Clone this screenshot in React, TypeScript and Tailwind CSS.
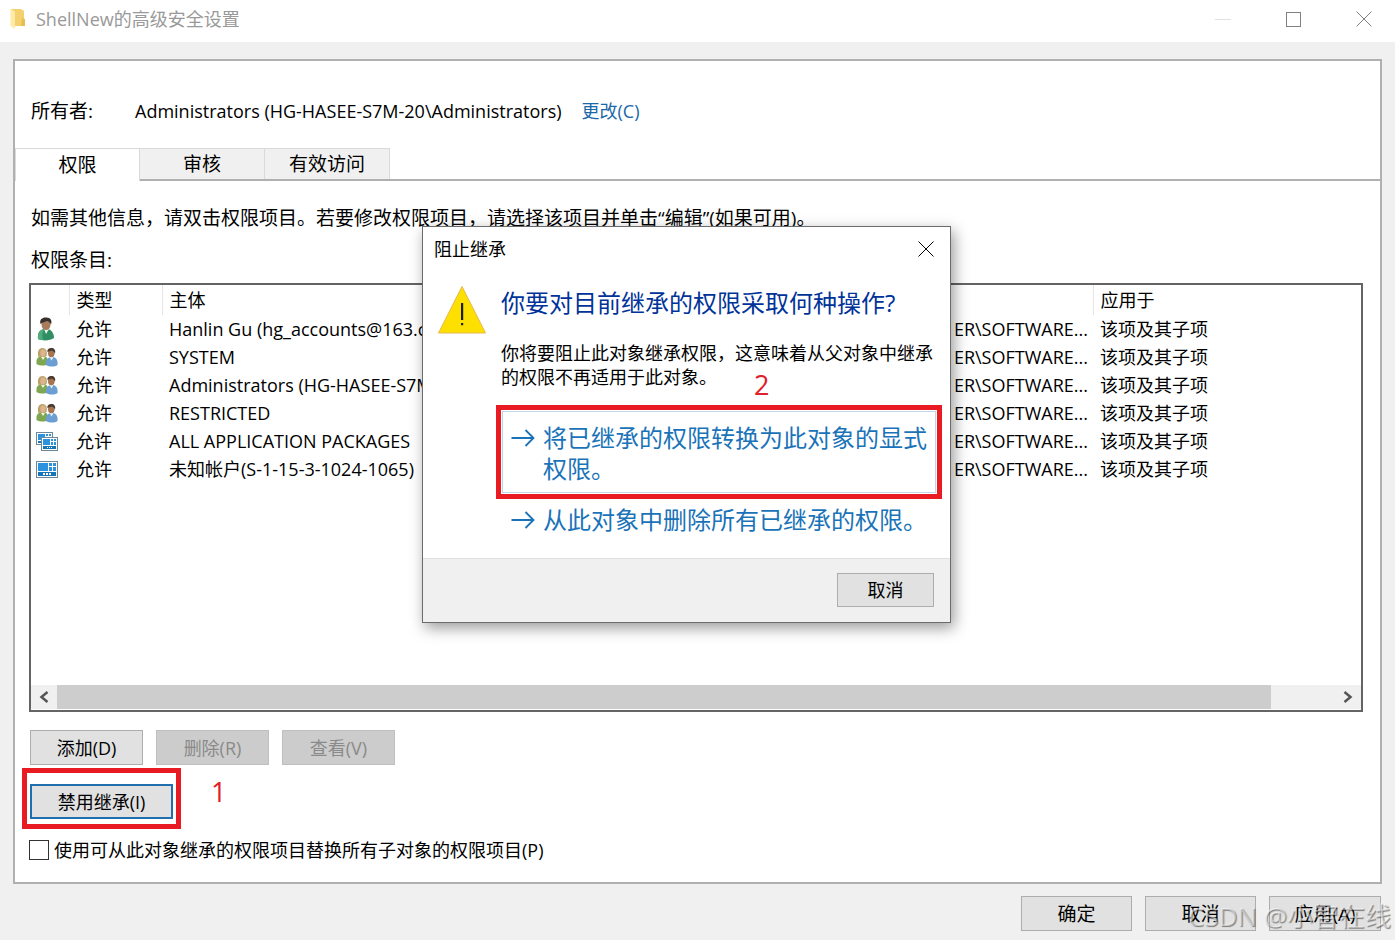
import React from "react";

type IconKind = "user" | "group" | "packages" | "package";

interface Entry {
  icon: IconKind;
  principal: string;
}

const entries: Entry[] = [
  { icon: "user", principal: "Hanlin Gu (hg_accounts@163.com)" },
  { icon: "group", principal: "SYSTEM" },
  { icon: "group", principal: "Administrators (HG-HASEE-S7M-20)" },
  { icon: "group", principal: "RESTRICTED" },
  { icon: "packages", principal: "ALL APPLICATION PACKAGES" },
  { icon: "package", principal: "未知帐户(S-1-15-3-1024-1065)" },
];

function FolderIcon() {
  return (
    <svg width="16" height="22" viewBox="0 0 16 22" aria-hidden="true">
      <path d="M1 1h10l3 2v15H4L1 18z" fill="#f4d06e" />
      <path d="M12 10l3 1v7h-4z" fill="#e9bd55" />
      <path d="M0.500 0.800L5 3.500v17.500L0.500 18z" fill="#ffeaa6" />
    </svg>
  );
}

function UserIcon() {
  return (
    <svg width="22" height="24" viewBox="0 0 22 24" aria-hidden="true">
      <path d="M2 22c-.5-6 1-9 6-10h4c4 1 6 5 6 9-4 3-12 3-16 1z" fill="#2f8f63" />
      <path d="M2 22c-.5-6 1-9 6-10-2 4-2 7-1 11-2 0-4 0-5-1z" fill="#52ab7e" />
      <path d="M8 12l2 5 3-5z" fill="#e8f3ec" />
      <ellipse cx="10" cy="7.500" rx="4.500" ry="5.500" fill="#a87b5c" />
      <path d="M4.500 7C3 2 7 0 10.500 0.500c4 0 6 3 4.500 7-1-2-2-3-4-3.500-2 1-4 1-6.500 3z" fill="#37302c" />
    </svg>
  );
}

function GroupIcon() {
  return (
    <svg width="22" height="20" viewBox="0 0 22 20" aria-hidden="true">
      <path d="M0.500 17c-.5-5 1-7 5-8h3c3 1 3.500 3 3.500 8-3 2-8 2-11.500 0z" fill="#7fa650" />
      <path d="M2.500 10C1 5 2.500 1 6.500 1s5 4 4 8z" fill="#b8a165" />
      <ellipse cx="7" cy="6" rx="2.700" ry="3.800" fill="#dcb48d" />
      <path d="M5 10l2 3 2-3z" fill="#eef3e4" />
      <path d="M10 18c-.5-5 1-7 4.500-8h3c3 1 4.500 3.500 4 8-3 2-8 2-11.500 0z" fill="#6b9fd4" />
      <path d="M13.500 10l2 3.500 2-3.500z" fill="#e8f0f8" />
      <ellipse cx="15.300" cy="6" rx="3.300" ry="4.300" fill="#a57550" />
      <path d="M11.500 5C11 2 13 1 15.500 1s4.500 2 3.500 5.500c-1-2-2-2.500-3.500-3-1 .8-2.500.6-4 1.500z" fill="#4a3b32" />
    </svg>
  );
}

function PackageIcon() {
  return (
    <svg width="22" height="17" viewBox="0 0 22 17" shapeRendering="crispEdges" aria-hidden="true">
      <rect x="0.500" y="0.500" width="21" height="16" fill="#fff" stroke="#6f8796" />
      <rect x="2" y="2" width="10" height="8" fill="#2b93dd" />
      <rect x="13" y="2" width="3" height="3" fill="#2b93dd" />
      <rect x="17" y="2" width="3" height="3" fill="#2b93dd" />
      <rect x="13" y="6" width="3" height="4" fill="#2b93dd" />
      <rect x="17" y="6" width="3" height="4" fill="#2b93dd" />
      <rect x="2" y="11" width="18" height="4" fill="#1675b8" />
      <path d="M7 12h2v2h-2zM10 12h2v2h-2zM13 12h2v2h-2z" fill="#fff" />
    </svg>
  );
}

function PackagesIcon() {
  return (
    <svg width="22" height="19" viewBox="0 0 22 19" shapeRendering="crispEdges" aria-hidden="true">
      <rect x="0.500" y="0.500" width="16" height="12" fill="#fff" stroke="#6f8796" />
      <rect x="2" y="2" width="7" height="6" fill="#2b93dd" />
      <path d="M10 2h2v2h-2zM13 2h2v2h-2z" fill="#2b93dd" />
      <rect x="2" y="9" width="3" height="2" fill="#1675b8" />
      <rect x="5.500" y="5.500" width="16" height="13" fill="#fff" stroke="#6f8796" />
      <rect x="7" y="7" width="7" height="6" fill="#2b93dd" />
      <path d="M15 7h2v2h-2zM18 7h2v2h-2zM15 10h2v3h-2zM18 10h2v3h-2z" fill="#2b93dd" />
      <rect x="7" y="14" width="13" height="3" fill="#1675b8" />
      <path d="M11 15h1v1h-1zM13 15h1v1h-1zM15 15h1v1h-1z" fill="#fff" />
    </svg>
  );
}

function EntryIcon({ kind }: { kind: IconKind }) {
  if (kind === "user") return <UserIcon />;
  if (kind === "group") return <GroupIcon />;
  if (kind === "packages") return <PackagesIcon />;
  return <PackageIcon />;
}

function CloseGlyph() {
  return (
    <svg width="16" height="16" viewBox="0 0 16 16" fill="none" stroke="currentColor" aria-hidden="true">
      <path d="M0.500 0.500l15 15M15.500 0.500l-15 15" />
    </svg>
  );
}

function ArrowGlyph() {
  return (
    <svg
      width="24"
      height="20"
      viewBox="0 0 24 20"
      fill="none"
      stroke="#1a73b8"
      strokeWidth="1.800"
      className="mt-1.5 shrink-0"
      aria-hidden="true"
    >
      <path d="M0.500 10h22M14.500 2l8 8-8 8" />
    </svg>
  );
}

function WarningIcon() {
  return (
    <svg width="50" height="50" viewBox="0 0 50 50" className="shrink-0" aria-hidden="true">
      <path d="M25 1.500L48.500 48h-47z" fill="#fde000" stroke="#e9b84a" />
      <path d="M24 18h2.200v17H24zM24 38h2.200v2.200H24z" fill="#1c1c1c" />
    </svg>
  );
}

function PushButton({ children, className = "", disabled = false }: {
  children: React.ReactNode;
  className?: string;
  disabled?: boolean;
}) {
  const tone = disabled
    ? "border-[#bfbfbf] bg-[#cccccc] text-[#8a8a8a]"
    : "border-[#adadad] bg-[#e1e1e1] text-black";
  return (
    <button type="button" disabled={disabled} className={`border text-center ${tone} ${className}`}>
      {children}
    </button>
  );
}

function InheritanceDialog() {
  return (
    <section
      role="dialog"
      aria-labelledby="dialog-title"
      className="absolute top-[226px] left-[422px] flex w-[529px] flex-col border border-[#6b6b6b] bg-white text-[18px] leading-6 shadow-[3px_5px_14px_rgba(0,0,0,0.4)]"
    >
      <header className="flex items-center justify-between pt-2 pr-4 pl-[11px]">
        <h2 id="dialog-title" className="leading-7">阻止继承</h2>
        <button type="button" aria-label="关闭">
          <CloseGlyph />
        </button>
      </header>
      <div className="flex gap-[14px] pt-[22px] pr-2 pl-[14px]">
        <WarningIcon />
        <div className="min-w-0 flex-1">
          <h3 className="text-[24px] leading-9 text-[#003399]">你要对目前继承的权限采取何种操作?</h3>
          <p className="mt-5 mr-2">你将要阻止此对象继承权限，这意味着从父对象中继承的权限不再适用于此对象。</p>
        </div>
      </div>
      <div className="mt-4 mr-2 ml-[73px] text-[24px] leading-[31px] text-[#1a73b8]">
        <div className="border-[5px] border-[#e81b23] p-px">
          <button type="button" className="flex w-full gap-2 border border-[#bcd8ea] px-2 pt-2.5 pb-2 text-left">
            <ArrowGlyph />
            <span className="min-w-0 flex-1 whitespace-nowrap">
              将已继承的权限转换为此对象的显式
              <br />
              权限。
            </span>
          </button>
        </div>
        <button type="button" className="flex w-full gap-2 px-[15px] pt-[5px] text-left">
          <ArrowGlyph />
          <span className="whitespace-nowrap">从此对象中删除所有已继承的权限。</span>
        </button>
      </div>
      <footer className="mt-[23px] flex justify-end border-t border-[#dfdfdf] bg-[#f0f0f0] px-4 pt-3.5 pb-[15px]">
        <PushButton className="h-[34px] w-[97px]">取消</PushButton>
      </footer>
      <span className="absolute top-[142px] left-[331px] text-[27px] leading-8 text-[#e02029]">2</span>
    </section>
  );
}

export default function App() {
  return (
    <div className="relative flex min-h-screen flex-col overflow-hidden bg-[#f0f0f0] font-['Open_Sans','Noto_Sans_CJK_SC',sans-serif] text-[19px] leading-7 text-black">
      <header className="flex h-[42px] items-center justify-between bg-white pr-[23px] pb-1 pl-[10px] text-[18px] text-[#999999]">
        <div className="flex items-center gap-[10px]">
          <FolderIcon />
          <h1>ShellNew的高级安全设置</h1>
        </div>
        <div className="flex items-center gap-[55px]">
          <button type="button" aria-label="最小化" disabled>
            <svg width="16" height="16" viewBox="0 0 16 16" stroke="#e2e2e2" aria-hidden="true">
              <path d="M0 8.500h16" />
            </svg>
          </button>
          <button type="button" aria-label="最大化">
            <svg width="15" height="15" viewBox="0 0 15 15" fill="none" stroke="#808080" aria-hidden="true">
              <rect x="0.500" y="0.500" width="14" height="14" />
            </svg>
          </button>
          <button type="button" aria-label="关闭" className="text-[#808080]">
            <CloseGlyph />
          </button>
        </div>
      </header>

      <main className="mx-[13px] mt-[17px] flex flex-1 flex-col border-2 border-[#b0b0b0] bg-white">
        <div className="flex pt-9 pl-4">
          <span className="w-[104px]">所有者:</span>
          <span className="mr-5 text-[18px]">Administrators (HG-HASEE-S7M-20\Administrators)</span>
          <a href="#change" className="text-[18px] text-[#1a68a8]">更改(C)</a>
        </div>

        <div role="tablist" className="mt-[23px] flex">
          <button type="button" role="tab" aria-selected="true" className="h-[33px] w-[125px] border border-b-0 border-[#d9d9d9]">权限</button>
          <div className="flex flex-1 border-b-2 border-[#b0b0b0]">
            <button type="button" role="tab" aria-selected="false" className="w-[125px] border-t border-r border-[#d9d9d9] bg-[#f0f0f0]">审核</button>
            <button type="button" role="tab" aria-selected="false" className="w-[125px] border-t border-r border-[#d9d9d9] bg-[#f0f0f0]">有效访问</button>
          </div>
        </div>

        <p className="mt-[23px] pl-4">如需其他信息，请双击权限项目。若要修改权限项目，请选择该项目并单击“编辑”(如果可用)。</p>
        <p className="mt-3.5 pl-4">权限条目:</p>

        <div className="mx-[14px] mr-[17px] mt-[9px] flex h-[429px] flex-col border-2 border-[#646464] text-[18px]">
          <table className="w-full table-fixed border-collapse text-left whitespace-nowrap">
            <colgroup>
              <col className="w-[38px]" />
              <col className="w-[93px]" />
              <col />
              <col className="w-[150px]" />
              <col className="w-[268px]" />
            </colgroup>
            <thead>
              <tr className="h-[30px]">
                <th className="border-r border-[#e5e5e5]" aria-label="图标" />
                <th className="border-r border-[#e5e5e5] pl-[7px] font-normal">类型</th>
                <th className="pl-[7px] font-normal">主体</th>
                <th className="border-r border-[#e5e5e5]" aria-label="继承" />
                <th className="pl-[7px] font-normal">应用于</th>
              </tr>
            </thead>
            <tbody>
              {entries.map((entry) => (
                <tr key={entry.principal + entry.icon} className="h-7">
                  <td className="pl-[5px]">
                    <EntryIcon kind={entry.icon} />
                  </td>
                  <td className="pl-[7px]">允许</td>
                  <td className="pl-[7px]">{entry.principal}</td>
                  <td className="pr-[5px] text-right">ER\SOFTWARE...</td>
                  <td className="pl-[7px]">该项及其子项</td>
                </tr>
              ))}
            </tbody>
          </table>
          <div className="mt-auto mb-px flex h-6 bg-[#f0f0f0]">
            <button type="button" aria-label="向左滚动" className="flex w-[26px] items-center justify-center">
              <svg width="10" height="12" viewBox="0 0 10 12" fill="none" stroke="#555" strokeWidth="2.500" aria-hidden="true">
                <path d="M8.500 1L2.500 6l6 5" />
              </svg>
            </button>
            <div className="flex-1">
              <div className="h-full w-[95%] bg-[#cdcdcd]" />
            </div>
            <button type="button" aria-label="向右滚动" className="flex w-[26px] items-center justify-center">
              <svg width="10" height="12" viewBox="0 0 10 12" fill="none" stroke="#555" strokeWidth="2.500" aria-hidden="true">
                <path d="M1.500 1l6 5-6 5" />
              </svg>
            </button>
          </div>
        </div>

        <div className="mt-[18px] flex gap-[13px] pl-[15px] text-[18px]">
          <PushButton className="h-[35px] w-[113px]">添加(D)</PushButton>
          <PushButton className="h-[35px] w-[113px]" disabled>删除(R)</PushButton>
          <PushButton className="h-[35px] w-[113px]" disabled>查看(V)</PushButton>
        </div>
        <div className="mt-[3px] flex gap-[30px] pl-[7px]">
          <div className="border-[5px] border-[#e81b23] px-[3px] pt-[11px] pb-[5px]">
            <button type="button" className="block h-[35px] w-[143px] border-2 border-[#1f6fae] bg-[#e1e1e1] text-[18px]">禁用继承(I)</button>
          </div>
          <span className="pt-2 text-[27px] leading-8 text-[#e02029]">1</span>
        </div>
        <label className="mt-[7px] flex items-center gap-[5px] pb-[17px] pl-[14px] text-[18px]">
          <input type="checkbox" className="size-5 appearance-none border border-[#333333] bg-white" />
          使用可从此对象继承的权限项目替换所有子对象的权限项目(P)
        </label>
      </main>

      <footer className="flex justify-end gap-[13px] pt-3 pr-[14px] pb-[9px]">
        <PushButton className="h-[35px] w-[111px]">确定</PushButton>
        <PushButton className="h-[35px] w-[111px]">取消</PushButton>
        <PushButton className="h-[35px] w-[112px]">应用(A)</PushButton>
      </footer>

      <InheritanceDialog />
      <span className="pointer-events-none absolute right-1 bottom-2 text-[26px] leading-8 text-white/50 [text-shadow:1px_1px_1px_rgba(0,0,0,0.45)]">CSDN @小智在线</span>
    </div>
  );
}
